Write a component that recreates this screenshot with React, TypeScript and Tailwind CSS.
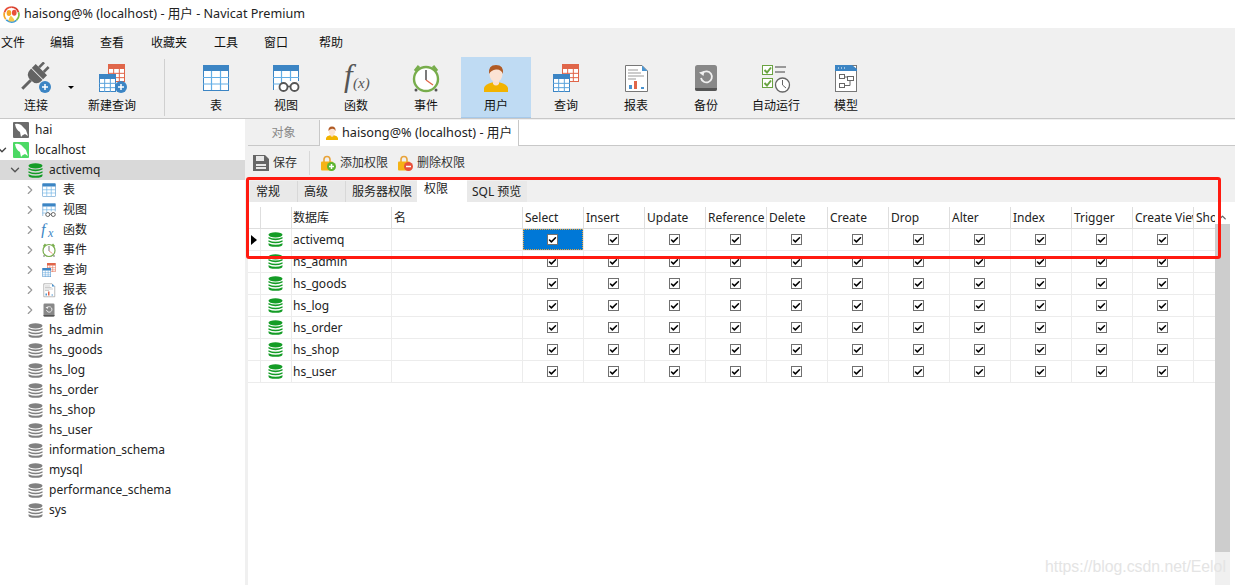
import type { ReactNode } from "react"
import { ChevronRight, ChevronDown, ChevronUp, Check } from "lucide-react"

const CJK = "font-['Noto_Sans','Noto_Sans_CJK_SC',sans-serif]"

function Svg({ size, box = 32, children }: { size: number; box?: number; children: ReactNode }) {
  return (
    <svg width={size} height={size} viewBox={`0 0 ${box} ${box}`} className="shrink-0">
      {children}
    </svg>
  )
}

function Logo() {
  return (
    <Svg size={17} box={16}>
      <path d="M2.6 12.5 A7 7 0 0 1 1.4 6" fill="none" stroke="#f5a623" strokeWidth="1.6" />
      <path d="M1.4 6 A7 7 0 0 1 8 1" fill="none" stroke="#e8503a" strokeWidth="1.6" />
      <path d="M8 1 A7 7 0 0 1 14.6 6" fill="none" stroke="#d8402f" strokeWidth="1.6" />
      <path d="M14.6 6 A7 7 0 0 1 12.6 13.5" fill="none" stroke="#7cc242" strokeWidth="1.6" />
      <path d="M3 13 Q8 17 12.6 13.5" fill="none" stroke="#3b9ad9" strokeWidth="1.6" />
      <ellipse cx="5.6" cy="6.6" rx="2.2" ry="2.8" fill="#f5a623" />
      <ellipse cx="10.6" cy="6.4" rx="2.2" ry="2.8" fill="#e8503a" />
      <path d="M5 14 Q6.5 8 8.5 10 Q10.5 12 11 14 Q8 15.4 5 14Z" fill="#f7c948" />
    </Svg>
  )
}

function PlusBadge({ x, y }: { x: number; y: number }) {
  return (
    <g>
      <circle cx={x} cy={y} r="6" fill="#3c85c4" />
      <path d={`M${x - 3} ${y}h6M${x} ${y - 3}v6`} stroke="#fff" strokeWidth="1.5" />
    </g>
  )
}

function ConnectIcon() {
  return (
    <Svg size={32}>
      <g transform="rotate(45 15 14)">
        <rect x="10.5" y="-2" width="2.6" height="7" fill="#636363" />
        <rect x="17" y="-2" width="2.6" height="7" fill="#636363" />
        <path d="M7 5H23V13Q23 20 15 20Q7 20 7 13Z" fill="#636363" />
        <path d="M15 20V32" stroke="#636363" strokeWidth="3" />
        <path d="M6 11H24" stroke="#f0f0f0" strokeWidth="1" />
      </g>
      <PlusBadge x={25} y={25} />
    </Svg>
  )
}

function MiniTable({ x, y, w, h, color, line }: { x: number; y: number; w: number; h: number; color: string; line: string }) {
  const cw = w / 3
  const top = 5
  const rh = (h - top) / 3
  return (
    <g>
      <rect x={x + 0.5} y={y + 0.5} width={w - 1} height={h - 1} fill="#fff" stroke={color} />
      <rect x={x} y={y} width={w} height={top} fill={color} rx="1" />
      {[1, 2].map((i) => (
        <path key={i} d={`M${x + cw * i} ${y + top}V${y + h}`} stroke={line} />
      ))}
      {[1, 2].map((i) => (
        <path key={i} d={`M${x} ${y + top + rh * i}H${x + w}`} stroke={line} />
      ))}
    </g>
  )
}

function NewQueryIcon() {
  return (
    <Svg size={32}>
      <MiniTable x={12} y={2} w={17} h={18} color="#e0664a" line="#e0664a" />
      <MiniTable x={3} y={12} w={17} h={18} color="#3c85c4" line="#5ba3dc" />
      <PlusBadge x={25} y={25} />
    </Svg>
  )
}

function TableIcon({ size = 32 }: { size?: number }) {
  return (
    <Svg size={size}>
      <rect x="3.5" y="3.5" width="25" height="25" fill="#fff" stroke="#3c85c4" />
      <path d="M3 3.5Q3 3 4 3H28Q29 3 29 4V9H3Z" fill="#3c85c4" />
      <path d="M11.5 9V28M20.5 9V28M3 15.5H29M3 22H29" stroke="#62aee6" strokeWidth="1.2" />
    </Svg>
  )
}

function ViewIcon({ size = 32 }: { size?: number }) {
  return (
    <Svg size={size}>
      <path d="M3.5 28V3.5H28.5V19" fill="#fff" stroke="#3c85c4" />
      <path d="M3 3H29V9H3Z" fill="#3c85c4" />
      <path d="M11.5 9V21M20.5 9V19M3 15.5H29M3 22H10" stroke="#62aee6" strokeWidth="1.2" />
      <circle cx="13.5" cy="25" r="4" fill="#fff" stroke="#555" strokeWidth="1.8" />
      <circle cx="24.5" cy="25" r="4" fill="#fff" stroke="#555" strokeWidth="1.8" />
      <path d="M17.5 24.5H20.5" stroke="#555" strokeWidth="1.6" />
    </Svg>
  )
}

function FuncIcon() {
  return (
    <svg width="32" height="32" viewBox="0 0 32 32" className="shrink-0 overflow-visible">
      <text x="4" y="24" fontFamily="Liberation Serif" fontStyle="italic" fontSize="31" fill="#555">f</text>
      <text x="13" y="26" fontFamily="Liberation Serif" fontStyle="italic" fontSize="15" fill="#555">(x)</text>
    </svg>
  )
}

function ClockIcon({ size = 32 }: { size?: number }) {
  return (
    <Svg size={size}>
      <circle cx="16" cy="17" r="12" fill="#fff" stroke="#78ad4c" strokeWidth="2.4" />
      <path d="M5 9 L9 4 M27 9 L23 4" stroke="#78ad4c" strokeWidth="3" />
      <path d="M16 8V18" stroke="#333" strokeWidth="1.3" />
      <path d="M16 18L23 23" stroke="#e0664a" strokeWidth="1.3" />
      <circle cx="26" cy="28" r="1.5" fill="#555" />
      <circle cx="6" cy="28" r="1.5" fill="#555" />
    </Svg>
  )
}

function UserIcon({ size = 32 }: { size?: number }) {
  return (
    <Svg size={size}>
      <path d="M4 30V26Q5 22 12 20.5H20Q27 22 28 26V30Z" fill="#f2b300" />
      <path d="M13 18H19V22Q16 25 13 22Z" fill="#fbe0cf" />
      <ellipse cx="16" cy="12" rx="6.5" ry="8" fill="#fbe3d4" />
      <path d="M9 12Q8 3 16 3Q24 3 23 12Q21 7 16 7.5Q11 8 9 12Z" fill="#b05a24" />
    </Svg>
  )
}

function QueryIcon({ size = 32 }: { size?: number }) {
  return (
    <Svg size={size}>
      <MiniTable x={12} y={2} w={17} h={18} color="#e0664a" line="#e0664a" />
      <MiniTable x={3} y={12} w={17} h={18} color="#3c85c4" line="#5ba3dc" />
    </Svg>
  )
}

function ReportIcon({ size = 32 }: { size?: number }) {
  return (
    <Svg size={size}>
      <path d="M5.5 3.5H22L27.5 9V29.5H5.5Z" fill="#fff" stroke="#777" />
      <path d="M22 3.5V9H27.5Z" fill="#4a94d0" />
      <path d="M8 8H18M8 11H21M8 14H24M8 17H16" stroke="#999" />
      <path d="M9 27V23H12V27Z" fill="#4a94d0" />
      <path d="M14 27V19H17V27Z" fill="#e0664a" />
      <path d="M21 27V25H24V27Z" fill="#4a94d0" />
    </Svg>
  )
}

function BackupIcon({ size = 32 }: { size?: number }) {
  return (
    <Svg size={size}>
      <rect x="5" y="3" width="22" height="26" rx="2.5" fill="#888" />
      <path d="M5 26H27V27Q27 29 25 29H7Q5 29 5 27Z" fill="#555" />
      <path d="M12.5 11A5.5 5.5 0 1 1 11 16" fill="none" stroke="#f0f0f0" strokeWidth="1.8" />
      <path d="M9 10.5L14.5 9L13.5 14Z" fill="#f0f0f0" />
    </Svg>
  )
}

function AutoRunIcon() {
  return (
    <Svg size={32}>
      <rect x="2.5" y="3.5" width="10" height="9" fill="#fff" stroke="#6aa342" />
      <path d="M4.5 8L7 10.5L11 5.5" fill="none" stroke="#6aa342" strokeWidth="2" />
      <rect x="2.5" y="16.5" width="10" height="9" fill="#fff" stroke="#6aa342" />
      <path d="M4.5 21L7 23.5L11 18.5" fill="none" stroke="#6aa342" strokeWidth="2" />
      <path d="M15 5H26M15 10H25" stroke="#999" strokeWidth="2" />
      <circle cx="22.5" cy="23" r="7" fill="#fff" stroke="#666" strokeWidth="1.3" />
      <path d="M22.5 18V23L26 26" fill="none" stroke="#666" />
    </Svg>
  )
}

function ModelIcon() {
  return (
    <Svg size={32}>
      <rect x="5.5" y="3.5" width="21" height="26" fill="#fff" stroke="#777" />
      <path d="M5 3H22L27 7V9H5Z" fill="#3c85c4" />
      <path d="M8 6h1M11 6h1M14 6h1" stroke="#fff" />
      <rect x="9.5" y="12.5" width="5" height="4" fill="#fff" stroke="#666" />
      <rect x="17.5" y="14.5" width="6" height="4" fill="#fff" stroke="#666" />
      <rect x="9.5" y="21.5" width="5" height="4" fill="#fff" stroke="#666" />
      <path d="M14.5 15H17.5M20 18.5V23.5H14.5" fill="none" stroke="#666" />
    </Svg>
  )
}

function DbIcon({ color = "#149c26", size = 15 }: { color?: string; size?: number }) {
  return (
    <Svg size={size} box={16}>
      <ellipse cx="8" cy="3" rx="7.5" ry="2.8" fill={color} />
      <path d="M.5 5.2Q8 8.6 15.5 5.2V7Q8 10.4 .5 7Z" fill={color} />
      <path d="M.5 8.8Q8 12.2 15.5 8.8V10.4Q8 13.8 .5 10.4Z" fill={color} />
      <path d="M.5 12Q8 15.4 15.5 12V13Q15.5 15.8 8 15.8Q.5 15.8 .5 13Z" fill={color} />
    </Svg>
  )
}

function ServerIcon({ color }: { color: string }) {
  return (
    <Svg size={16} box={16}>
      <rect width="16" height="16" rx="1" fill={color} />
      <path d="M2 2Q7 1 10 5Q13 7 14 11L15 14L12 12Q9 13 8 15L7 10Q3 8 2 2Z" fill="#fff" />
    </Svg>
  )
}

function FxIcon() {
  return (
    <svg width="16" height="16" viewBox="0 0 16 16" className="shrink-0">
      <text x="0" y="13" fontFamily="Liberation Serif" fontStyle="italic" fontSize="16" fill="#3c85c4">f</text>
      <text x="7" y="15" fontFamily="Liberation Serif" fontStyle="italic" fontSize="12" fill="#3c85c4">x</text>
    </svg>
  )
}

function SaveIcon() {
  return (
    <Svg size={16} box={16}>
      <path d="M0 0H12L16 4V16H0Z" fill="#666" />
      <rect x="3" y="1" width="8" height="5" fill="#e8e8e8" />
      <rect x="3" y="9" width="10" height="2" fill="#e8e8e8" />
      <rect x="3" y="12" width="10" height="2" fill="#e8e8e8" />
    </Svg>
  )
}

function LockIcon({ plus }: { plus: boolean }) {
  return (
    <Svg size={16} box={16}>
      <path d="M4 7V4.5Q4 1.5 7 1.5Q10 1.5 10 4.5V7" fill="none" stroke="#e8a33a" strokeWidth="1.6" />
      <rect x="1" y="6.5" width="12" height="9" rx="1" fill="#f5b316" />
      <circle cx="11.5" cy="11.5" r="4.5" fill={plus ? "#5cb531" : "#e8503a"} />
      <path d={plus ? "M9 11.5h5M11.5 9v5" : "M9 11.5h5"} stroke="#fff" strokeWidth="1.5" />
    </Svg>
  )
}

function Tool({ icon, label, active }: { icon: ReactNode; label: string; active?: boolean }) {
  return (
    <div className={`flex h-[61px] w-[70px] flex-col items-center pt-[5px] ${active ? "bg-[#bfdbf3] border-b border-[#a6c9ea]" : ""}`}>
      <div className="h-8">{icon}</div>
      <span className="mt-[4px] text-[12px] leading-[16px] text-[#111]">{label}</span>
    </div>
  )
}

const menus = [
  { label: "文件", width: "w-[49px]" },
  { label: "编辑", width: "w-[50px]" },
  { label: "查看", width: "w-[51px]" },
  { label: "收藏夹", width: "w-[63px]" },
  { label: "工具", width: "w-[50px]" },
  { label: "窗口", width: "w-[55px]" },
  { label: "帮助", width: "w-[50px]" },
]

function TreeRow({ slot, chevron, icon, label, selected }: { slot: string; chevron?: ReactNode; icon: ReactNode; label: string; selected?: boolean }) {
  return (
    <div className={`flex h-5 items-center ${selected ? "bg-[#d9d9d9]" : ""}`}>
      <div className={`flex h-5 shrink-0 items-center justify-end ${slot}`}>{chevron}</div>
      {icon}
      <span className="ml-[6px] text-[12px] leading-5 text-[#222]">{label}</span>
    </div>
  )
}

const closed = <ChevronRight size={14} strokeWidth={2} className="mr-[4px] shrink-0 text-[#999]" />
const open = <ChevronDown size={14} strokeWidth={2.4} className="mr-[6px] shrink-0 text-[#555]" />

const children = [
  { label: "表", icon: <TableIcon size={16} /> },
  { label: "视图", icon: <ViewIcon size={16} /> },
  { label: "函数", icon: <FxIcon /> },
  { label: "事件", icon: <ClockIcon size={16} /> },
  { label: "查询", icon: <QueryIcon size={16} /> },
  { label: "报表", icon: <ReportIcon size={16} /> },
  { label: "备份", icon: <BackupIcon size={16} /> },
]

const otherDbs = ["hs_admin", "hs_goods", "hs_log", "hs_order", "hs_shop", "hs_user", "information_schema", "mysql", "performance_schema", "sys"]

const privileges = ["Select", "Insert", "Update", "Reference", "Delete", "Create", "Drop", "Alter", "Index", "Trigger", "Create View"]

const grants = ["activemq", "hs_admin", "hs_goods", "hs_log", "hs_order", "hs_shop", "hs_user"]

function CheckBox() {
  return (
    <span className="flex h-[11px] w-[11px] items-center justify-center border border-[#707070] bg-white">
      <Check size={10} strokeWidth={4} className="text-black" />
    </span>
  )
}

const cell = "flex items-center overflow-hidden whitespace-nowrap border-l border-b"

function PrivilegeGrid() {
  return (
    <div className="grid grid-cols-[12px_31px_100px_131px_repeat(11,61px)_22px] auto-rows-[22px] text-[12px] text-[#222]">
      <div className="border-b border-[#dedede]" />
      <div className={`${cell} border-[#dedede]`} />
      <div className={`${cell} border-[#dedede] pl-[1px]`}>数据库</div>
      <div className={`${cell} border-[#dedede] pl-[2px]`}>名</div>
      {privileges.map((p) => (
        <div key={p} className={`${cell} border-[#dedede] pl-[2px]`}>{p}</div>
      ))}
      <div className={`${cell} border-[#dedede] pl-[2px]`}>Show</div>
      {grants.map((name, r) => (
        <div key={name} className="contents">
          <div className="flex items-center border-b border-[#ececec]">
            {r === 0 && <span className="ml-[3px] h-0 w-0 border-y-[5px] border-l-[6px] border-y-transparent border-l-black" />}
          </div>
          <div className={`${cell} justify-center border-[#ececec] pr-[1px]`}>
            <DbIcon />
          </div>
          <div className={`${cell} border-[#ececec] pl-[1px]`}>{name}</div>
          <div className={`${cell} border-[#ececec]`} />
          {privileges.map((p, c) => (
            <div key={p} className={`${cell} justify-center border-[#ececec] ${r === 0 && c === 0 ? "" : "pr-[1px]"}`}>
              {r === 0 && c === 0 ? (
                <div className="flex h-full w-full items-center justify-center border border-dotted border-[#e8a33a] bg-[#0078d7] pr-[1px]">
                  <CheckBox />
                </div>
              ) : (
                <CheckBox />
              )}
            </div>
          ))}
          <div className={`${cell} border-[#ececec]`} />
        </div>
      ))}
    </div>
  )
}

export default function App() {
  return (
    <div className={`relative flex h-[585px] w-[1235px] flex-col overflow-hidden bg-white ${CJK}`}>
      <div className="flex h-7 shrink-0 items-center gap-[4px] pl-[3px] text-[12.6px] text-[#222]">
        <Logo />
        <span>haisong@% (localhost) - 用户 - Navicat Premium</span>
      </div>

      <div className="flex h-7 shrink-0 items-center bg-[#f0f0f0] pl-[1px] pt-[2px] text-[12px] text-[#111]">
        {menus.map((m) => (
          <span key={m.label} className={m.width}>{m.label}</span>
        ))}
      </div>

      <div className="flex h-[63px] shrink-0 items-start border-b border-[#c8c8c8] bg-[#f0f0f0] pl-[1px] pt-px">
        <Tool icon={<ConnectIcon />} label="连接" />
        <span className="-ml-[3px] mt-[29px] h-0 w-0 border-x-[3px] border-t-[3px] border-x-transparent border-t-black" />
        <div className="ml-[3px]">
          <Tool icon={<NewQueryIcon />} label="新建查询" />
        </div>
        <div className="ml-[17px] mt-[2px] h-[57px] w-px bg-[#d0d0d0]" />
        <div className="ml-[16px] flex">
          <Tool icon={<TableIcon />} label="表" />
          <Tool icon={<ViewIcon />} label="视图" />
          <Tool icon={<FuncIcon />} label="函数" />
          <Tool icon={<ClockIcon />} label="事件" />
          <Tool icon={<UserIcon />} label="用户" active />
          <Tool icon={<QueryIcon />} label="查询" />
          <Tool icon={<ReportIcon />} label="报表" />
          <Tool icon={<BackupIcon />} label="备份" />
          <Tool icon={<AutoRunIcon />} label="自动运行" />
          <Tool icon={<ModelIcon />} label="模型" />
        </div>
      </div>

      <div className="flex min-h-0 flex-1">
        <div className="w-[245px] shrink-0 pt-[1px]">
          <TreeRow slot="w-[13px]" icon={<ServerIcon color="#6b6b6b" />} label="hai" />
          <TreeRow slot="w-[13px]" chevron={<ChevronDown size={14} strokeWidth={2.4} className="mr-[4px] shrink-0 text-[#444]" />} icon={<ServerIcon color="#4cd964" />} label="localhost" />
          <TreeRow slot="w-[28px]" chevron={open} icon={<DbIcon />} label="activemq" selected />
          {children.map((c) => (
            <TreeRow key={c.label} slot="w-[41px]" chevron={closed} icon={c.icon} label={c.label} />
          ))}
          {otherDbs.map((d) => (
            <TreeRow key={d} slot="w-[28px]" icon={<DbIcon color="#808080" />} label={d} />
          ))}
        </div>

        <div className="flex min-w-0 flex-1 flex-col bg-[#f0f0f0] pl-[3px] pt-[1px]">
          <div className="flex h-[26px] shrink-0 text-[12.7px]">
            <div className="flex w-[71px] items-center justify-center border-b border-[#c8c8c8] text-[12px] text-[#888]">对象</div>
            <div className="flex w-[200px] items-center gap-[2px] border-x border-[#c8c8c8] bg-white pl-[4px] text-[#222]">
              <UserIcon size={16} />
              <span>haisong@% (localhost) - 用户</span>
            </div>
            <div className="flex-1 border-b border-[#c8c8c8] bg-white" />
          </div>

          <div className="flex h-[32px] shrink-0 items-center pl-[5px] pt-[2px] text-[12px] text-[#333]">
            <SaveIcon />
            <span className="ml-[4px]">保存</span>
            <div className="ml-[12px] h-6 w-px bg-[#d8d8d8]" />
            <div className="ml-[10px]"><LockIcon plus /></div>
            <span className="ml-[4px]">添加权限</span>
            <div className="ml-[9px]"><LockIcon plus={false} /></div>
            <span className="ml-[4px]">删除权限</span>
          </div>

          <div className="flex h-[24px] shrink-0 items-end pl-[2px] text-[12px] text-[#222]">
            <div className="flex h-[21px] w-[48px] items-center border-r border-[#d8d8d8] bg-[#e9e9e9] pl-[6px]">常规</div>
            <div className="flex h-[21px] w-[48px] items-center border-r border-[#d8d8d8] bg-[#e9e9e9] pl-[6px]">高级</div>
            <div className="flex h-[21px] w-[71px] items-center bg-[#e9e9e9] pl-[6px]">服务器权限</div>
            <div className="flex h-[24px] w-[50px] items-start bg-white pl-[7px] pt-[2px]">权限</div>
            <div className="flex h-[21px] w-[60px] items-center bg-[#e9e9e9] pl-[5px]">SQL 预览</div>
          </div>

          <div className="flex min-h-0 flex-1 bg-white">
            <div className="w-[967px] shrink-0 pt-[5px]">
              <PrivilegeGrid />
            </div>
            <div className="flex w-[15px] shrink-0 flex-col">
              <div className="flex h-[22px] items-end justify-center bg-white pb-[1px]">
                <ChevronUp size={11} strokeWidth={3} className="text-[#666]" />
              </div>
              <div className="h-[328px] bg-[#cdcdcd]" />
              <div className="flex-1 bg-[#f0f0f0]" />
            </div>
          </div>
        </div>
      </div>

      <div className="absolute left-[246px] top-[177px] h-[82px] w-[975px] rounded-[3px] border-[3px] border-[#ff1a10]" />
      <div className="absolute left-[1045px] top-[557px] font-['Liberation_Sans',sans-serif] text-[15.8px] leading-5 text-[#e4e4e4]">https://blog.csdn.net/Eelol</div>
    </div>
  )
}
